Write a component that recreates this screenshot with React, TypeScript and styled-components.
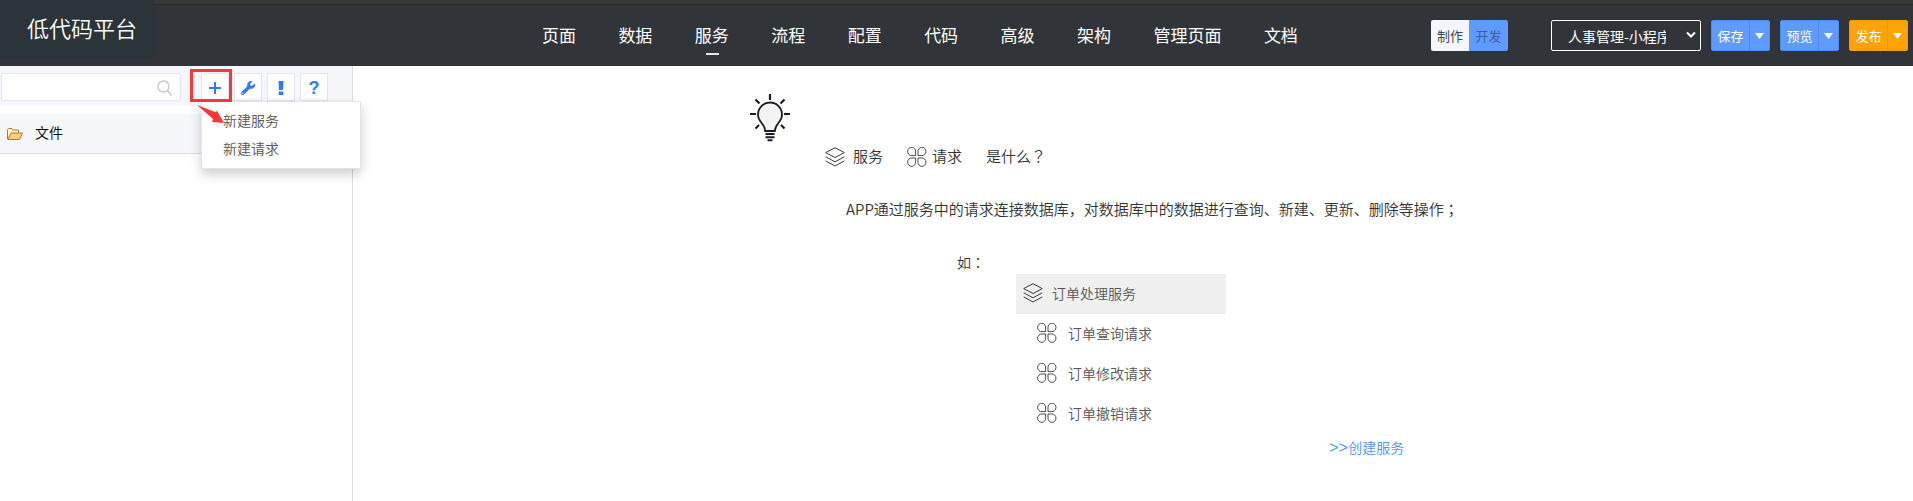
import React from "react";
import styled, { createGlobalStyle } from "styled-components";
import { FaWrench } from "react-icons/fa";

const Global = createGlobalStyle`
  * { box-sizing: border-box; }
  body { margin: 0; background: #fff; color: #333; font: 350 14px/20px "Noto Sans CJK SC", sans-serif; }
  button, input, select { font: inherit; }
`;

const Page = styled.div`
  display: flex;
  flex-direction: column;
  min-height: 100vh;
`;

const Header = styled.header`
  display: grid;
  grid-template-columns: 153px 38fr 756px 13fr auto;
  height: 66px;
  background: linear-gradient(#383838 0 4px, #262728 4px 5px, #313439 5px);
`;

const Logo = styled.div`
  height: 58px;
  padding-left: 27px;
  background: #2a3439;
  color: #fff;
  font-size: 22px;
  line-height: 54px;
`;

const Nav = styled.nav`
  grid-column: 3;
  display: flex;
  justify-content: space-between;
  align-items: center;
  padding-top: 4px;
`;

const NavLink = styled.a<{ $active?: boolean }>`
  position: relative;
  color: #fff;
  font-size: 17px;
  font-weight: 400;
  line-height: 24px;
  text-decoration: none;
  white-space: nowrap;
  &::after {
    content: "";
    display: ${(p) => (p.$active ? "block" : "none")};
    position: absolute;
    top: 30px;
    left: calc(50% - 6px);
    width: 13px;
    height: 2px;
    background: #e4e6ea;
  }
`;

const Tools = styled.div`
  grid-column: 5;
  display: flex;
  align-items: center;
  gap: 10px;
  padding: 5px 5px 0 0;
  font-weight: 400;
`;

const Segmented = styled.div`
  display: flex;
  height: 31px;
  margin-right: 33px;
  border-radius: 2px;
  overflow: hidden;
`;

const Segment = styled.button<{ $on?: boolean }>`
  width: ${(p) => (p.$on ? 39 : 38)}px;
  padding: 0;
  border: 0;
  background: ${(p) => (p.$on ? "#5f9bff" : "#f3f6ff")};
  color: ${(p) => (p.$on ? "#3c5f98" : "#42464e")};
  font-size: 13px;
`;

const SelectBox = styled.div`
  position: relative;
  width: 150px;
  svg { position: absolute; right: 5px; top: 11px; pointer-events: none; }
`;

const AppSelect = styled.select`
  display: block;
  appearance: none;
  width: 100%;
  height: 31px;
  padding: 0 34px 0 16px;
  border: 1px solid #fff;
  border-radius: 2px;
  background: transparent;
  color: #fff;
  font-size: 14px;
`;

const SplitButton = styled.div<{ $tone: string; $line: string }>`
  display: flex;
  height: 31px;
  border: 1px solid ${(p) => p.$line};
  border-radius: 2px;
  background: ${(p) => p.$tone};
  button {
    display: flex;
    align-items: center;
    justify-content: center;
    width: 37px;
    padding: 0;
    border: 0;
    background: none;
    color: #fff;
    font-size: 13px;
  }
  button + button { width: 20px; border-left: 1px solid ${(p) => p.$line}; }
`;

const Body = styled.div`
  display: flex;
  flex: 1;
`;

const Sidebar = styled.aside`
  width: 353px;
  flex: none;
  border-right: 1px solid #ddd;
`;

const Toolbar = styled.div`
  display: flex;
  align-items: center;
  gap: 5px;
  height: 40px;
  padding: 2px 0 0 1px;
  background: #f6f7fa;
`;

const Search = styled.label`
  position: relative;
  width: 180px;
  margin-right: 15px;
  svg { position: absolute; right: 9px; top: 7px; }
`;

const SearchInput = styled.input`
  display: block;
  width: 100%;
  height: 28px;
  padding: 0 30px 0 8px;
  border: 1px solid #e2e5ef;
  border-radius: 2px;
  background: #fff;
  outline: none;
`;

const ToolSlot = styled.div`
  position: relative;
`;

const ToolButton = styled.button`
  display: flex;
  align-items: center;
  justify-content: center;
  width: 28px;
  height: 28px;
  padding: 2px 0 0;
  border: 1px solid #e2e5ef;
  background: #fff;
  color: #2a7bff;
`;

const QuestionMark = styled.span`
  font: bold 18px/20px "Liberation Sans", sans-serif;
`;

const Menu = styled.div`
  position: absolute;
  z-index: 2;
  top: 28px;
  left: 0;
  width: 160px;
  padding: 4px 0 6px;
  border: 1px solid #e2e5ef;
  border-radius: 2px;
  background: #fff;
  box-shadow: 0 5px 12px rgba(0, 0, 0, 0.2);
`;

const MenuItem = styled.button`
  display: block;
  width: 100%;
  height: 28px;
  padding: 0 0 0 21px;
  border: 0;
  background: none;
  color: #555;
  text-align: left;
`;

const Highlight = styled.div`
  position: absolute;
  z-index: 3;
  top: -4px;
  left: -11px;
  width: 42px;
  height: 33px;
  border: 3px solid #fb3636;
  pointer-events: none;
`;

const Pointer = styled.svg`
  position: absolute;
  z-index: 3;
  top: 32px;
  left: -4px;
  pointer-events: none;
`;

const Label = styled.span`
  padding-bottom: 2px;
`;

const FileRow = styled.div`
  display: flex;
  align-items: center;
  gap: 12px;
  height: 40px;
  margin-top: 8px;
  padding-left: 7px;
  border-bottom: 1px solid #ddd;
  background: #f6f7fa;
  color: #000;
  ${Label} { padding-bottom: 4px; }
`;

const Main = styled.main`
  flex: 1;
  padding-top: 28px;
`;

const Guide = styled.section`
  width: 766px;
  margin: 0 auto;
  svg { display: block; flex: none; }
`;

const Heading = styled.h1`
  display: flex;
  align-items: center;
  height: 24px;
  margin: 3px 0 0 75px;
  font-size: 15px;
  font-weight: inherit;
`;

const Term = styled.span<{ $gap: number }>`
  display: flex;
  align-items: center;
  gap: ${(p) => p.$gap}px;
  margin-right: 24px;
`;

const Lead = styled.p`
  margin: 28px 0 0 96px;
  font-size: 15px;
  line-height: 24px;
`;

const Example = styled.p`
  margin: 30px 0 0 207px;
  line-height: 22px;
`;

const Mark = styled.span`
  font-family: "Noto Sans CJK TC", sans-serif;
`;

const Tree = styled.ul`
  width: 210px;
  margin: 1px 0 0 266px;
  padding: 0;
  list-style: none;
`;

const TreeItem = styled.li<{ $root?: boolean }>`
  display: flex;
  align-items: center;
  gap: ${(p) => (p.$root ? 9 : 11)}px;
  height: 40px;
  padding: 0 0 2px ${(p) => (p.$root ? 7 : 21)}px;
  background: ${(p) => (p.$root ? "#f0f0f0" : "none")};
  color: #555;
`;

const CreateLink = styled.a`
  display: flex;
  align-items: center;
  width: max-content;
  margin: 3px 0 0 579px;
  color: #4f94ff;
  text-decoration: none;
`;

const Chevrons = styled.span`
  padding-top: 4px;
  font: 16px/16px "Liberation Mono", monospace;
`;

const Layers = () => (
  <svg width="20" height="20" viewBox="0 0 20 20" fill="none" stroke="#3a3a3a" strokeWidth="1" strokeLinejoin="round">
    <path d="M10 .7 19.3 5.600 10 10.500 .7 5.600Z" />
    <path d="M.7 9.800 10 14.800l9.300-5M.7 13.900 10 19l9.300-5.100" />
  </svg>
);

const Clover = () => (
  <svg width="20" height="20" viewBox="0 0 20 20" fill="none" stroke="#484848" strokeWidth="1">
    <path d="M8.600 8.600H5A4 4.200 0 1 1 8.600 5Z" />
    <path d="M11 8.600H14.600A4 4.200 0 1 0 11 5Z" />
    <path d="M8.600 11H5A4 4.200 0 1 0 8.600 14.600Z" />
    <path d="M11 11H14.600A4 4.200 0 1 1 11 14.600Z" />
  </svg>
);

const Bulb = () => (
  <svg width="40" height="48" viewBox="0 0 40 48" fill="none" stroke="#1b1b26" strokeWidth="2">
    <path d="M15 37C15.500 30 8 28.500 8 20.500a12 12 0 0 1 24 0C32 28.500 24.500 30 25 37Z" fill="#f4f4f4" strokeWidth="1.800" strokeLinejoin="round" />
    <path d="M20 0v6M0 20h6M34 20h6M5.500 5.500l4 4M34.500 5.500l-4 4M5.500 34.500l3.500-3.500M34.500 34.500 31 31" strokeWidth="2.200" />
    <path d="M15.500 40h9M15.500 43.200h9M17.500 46.300h5" />
  </svg>
);

const Caret = () => (
  <svg width="9" height="6" viewBox="0 0 9 6" fill="#fff"><path d="M0 0h9L4.500 6Z" /></svg>
);

const Folder = () => (
  <svg width="16" height="12" viewBox="0 0 16 12" stroke="#b9772d" strokeLinejoin="round">
    <path d="M.5 11V1.500L1.500.5H5l1 1.500h5.500V5" fill="#fff3cf" />
    <path d="M.8 11.500 4 5h11.500l-3 6.500Z" fill="#f8cf7c" />
  </svg>
);

const tabs = ["页面", "数据", "服务", "流程", "配置", "代码", "高级", "架构", "管理页面", "文档"];

const actions = [
  { label: "保存", tone: "#5f9bff", line: "#4a8dfb" },
  { label: "预览", tone: "#5f9bff", line: "#4a8dfb" },
  { label: "发布", tone: "#ffa408", line: "#f09a0a" },
];

const requests = ["订单查询请求", "订单修改请求", "订单撤销请求"];

export default function App() {
  return (
    <Page>
      <Global />
      <Header>
        <Logo>低代码平台</Logo>
        <Nav>
          {tabs.map((t) => (
            <NavLink key={t} href="#" $active={t === "服务"}>{t}</NavLink>
          ))}
        </Nav>
        <Tools>
          <Segmented>
            <Segment>制作</Segment>
            <Segment $on>开发</Segment>
          </Segmented>
          <SelectBox>
            <AppSelect aria-label="应用">
              <option>人事管理-小程序</option>
            </AppSelect>
            <svg width="10" height="8" viewBox="0 0 10 8" fill="none" stroke="#fff" strokeWidth="2">
              <path d="M1 1.500 5 5.500l4-4" />
            </svg>
          </SelectBox>
          {actions.map((a) => (
            <SplitButton key={a.label} $tone={a.tone} $line={a.line}>
              <button>{a.label}</button>
              <button aria-label={a.label + "选项"}><Caret /></button>
            </SplitButton>
          ))}
        </Tools>
      </Header>
      <Body>
        <Sidebar>
          <Toolbar>
            <Search>
              <SearchInput type="text" aria-label="搜索" />
              <svg width="15" height="16" viewBox="0 0 15 16" fill="none" stroke="#c8c8c8" strokeWidth="1.400">
                <circle cx="6.500" cy="6.500" r="5.500" />
                <path d="m10.500 10.500 4 5" />
              </svg>
            </Search>
            <ToolSlot>
              <ToolButton aria-label="新建">
                <svg width="12" height="12" viewBox="0 0 12 12" stroke="#2a7bff" strokeWidth="2"><path d="M6 0v12M0 6h12" /></svg>
              </ToolButton>
              <Menu>
                <MenuItem>新建服务</MenuItem>
                <MenuItem>新建请求</MenuItem>
              </Menu>
              <Highlight />
              <Pointer width="30" height="20" viewBox="0 0 30 20" fill="#fb3636">
                <path d="M0 0 18 7l2-1 7 12-12-1 1-3Z" />
              </Pointer>
            </ToolSlot>
            <ToolButton aria-label="设置"><FaWrench size={14} /></ToolButton>
            <ToolButton aria-label="提示">
              <svg width="6" height="14" viewBox="0 0 6 14" fill="#2a7bff"><path d="M.5 0h5L5 9H1ZM.7 10.500h4.600V14H.7Z" /></svg>
            </ToolButton>
            <ToolButton aria-label="帮助"><QuestionMark>?</QuestionMark></ToolButton>
          </Toolbar>
          <FileRow><Folder /><Label>文件</Label></FileRow>
        </Sidebar>
        <Main>
          <Guide>
            <Bulb />
            <Heading>
              <Term $gap={8}><Layers /><Label>服务</Label></Term>
              <Term $gap={5}><Clover /><Label>请求</Label></Term>
              <Label>是什么<Mark lang="zh-TW">？</Mark></Label>
            </Heading>
            <Lead>
              APP通过服务中的请求连接数据库，对数据库中的数据进行查询、新建、更新、删除等操作<Mark lang="zh-TW">；</Mark>
            </Lead>
            <Example>如<Mark lang="zh-TW">：</Mark></Example>
            <Tree>
              <TreeItem $root><Layers />订单处理服务</TreeItem>
              {requests.map((r) => (
                <TreeItem key={r}><Clover />{r}</TreeItem>
              ))}
            </Tree>
            <CreateLink href="#"><Chevrons>&gt;&gt;</Chevrons>创建服务</CreateLink>
          </Guide>
        </Main>
      </Body>
    </Page>
  );
}
